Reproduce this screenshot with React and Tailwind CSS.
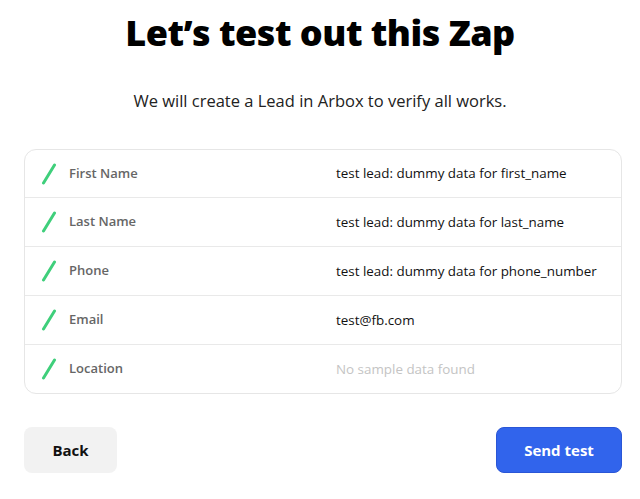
import React from 'react';

const FIELDS = [
  { label: 'First Name', value: 'test lead: dummy data for first_name' },
  { label: 'Last Name', value: 'test lead: dummy data for last_name' },
  { label: 'Phone', value: 'test lead: dummy data for phone_number' },
  { label: 'Email', value: 'test@fb.com' },
  { label: 'Location', value: null },
];

const Slash = () => (
  <svg width="16" height="22" viewBox="0 0 16 22" fill="none">
    <path d="M13.5 2L2.5 20" stroke="#3fcf7b" strokeWidth="3" strokeLinecap="round" />
  </svg>
);

export default function App() {
  return (
    <div className="w-[640px] h-[499px] bg-white overflow-hidden" style={{ fontFamily: '"Open Sans", sans-serif' }}>
      <h1 className="text-center text-[36px] leading-[44px] font-extrabold text-black tracking-[-0.5px] pt-[11px]">
        Let’s test out this Zap
      </h1>
      <p className="text-center text-[16.5px] leading-[24px] text-[#222] mt-[34px]">
        We will create a Lead in Arbox to verify all works.
      </p>

      <div className="ml-6 w-[598px] mt-[36px] border border-[#e6e6e6] rounded-xl">
        {FIELDS.map((f, i) => (
          <div
            key={f.label}
            className={`flex items-center ${i > 0 ? 'h-[49px] border-t border-[#e9e9e9]' : 'h-[47px]'}`}
          >
            <div className="w-[44px] flex justify-end pr-[12px]">
              <Slash />
            </div>
            <div className="w-[267px] text-[13px] font-semibold text-[#666]">{f.label}</div>
            {f.value ? (
              <div className="text-[13.4px] font-medium text-[#111]">{f.value}</div>
            ) : (
              <div className="text-[13.4px] text-[#c4c4c4]">No sample data found</div>
            )}
          </div>
        ))}
      </div>

      <div className="flex justify-between ml-6 w-[598px] mt-[33px]">
        <button className="w-[93px] h-[46px] rounded-lg bg-[#f2f2f2] text-[15px] font-bold text-[#111]">
          Back
        </button>
        <button className="w-[126px] h-[46px] rounded-lg bg-[#3164ec] border border-[#2a56d6] text-[15px] font-bold text-white">
          Send test
        </button>
      </div>
    </div>
  );
}
